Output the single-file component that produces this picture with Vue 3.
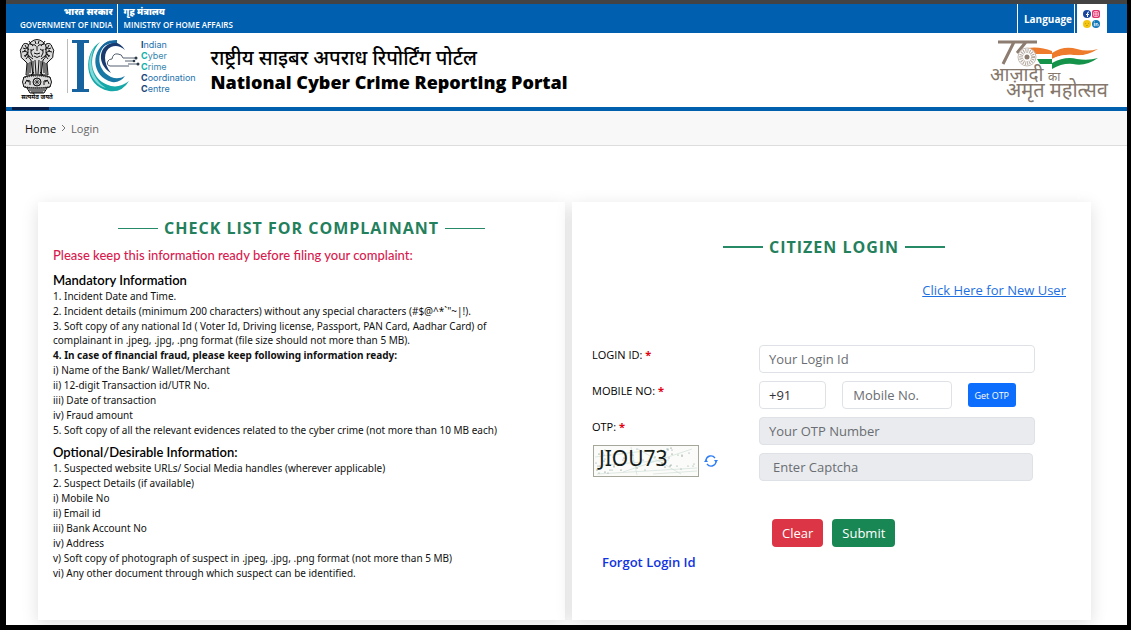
<template>
  <div class="page">
    <div class="topbar">
      <div class="gov">
        <span class="gov-item gov-india"><b lang="hi">भारत सरकार</b>GOVERNMENT OF INDIA</span>
        <span class="gov-item"><b lang="hi">गृह मंत्रालय</b>MINISTRY OF HOME AFFAIRS</span>
      </div>
      <div class="tools">
        <button type="button" class="language">Language</button>
        <a href="#" class="social" aria-label="Social media">
          <svg width="18" height="20" viewBox="0 0 18 20">
            <circle cx="4" cy="5" r="4" fill="#17479e" />
            <path d="M4.500 8V5.500H6M4.500 5.500H3M4.500 5.500V3.800Q4.500 3 6 3" stroke="#fff" fill="none" />
            <rect x="9" y="1" width="8" height="8" rx="2" fill="#e1306c" />
            <rect x="10.500" y="2.500" width="5" height="5" rx="1.500" fill="none" stroke="#ffd3e2" stroke-width=".8" />
            <circle cx="13" cy="5" r="1.200" fill="none" stroke="#fff" stroke-width=".8" />
            <circle cx="4" cy="15" r="4" fill="#f2c511" />
            <path d="M2 14.500h1M5 14.500h1M3 16.500h2" stroke="#c69a00" stroke-width=".8" />
            <circle cx="13" cy="15" r="4" fill="#1178b8" />
            <path d="M11.300 14v3.200M11.300 12.500v.8M13 17.200V14M13 15.200q1.800-1.600 2 .2v1.800" stroke="#fff" fill="none" stroke-width=".9" />
          </svg>
        </a>
      </div>
    </div>

    <header class="header">
      <svg class="emblem" width="36" height="64" viewBox="0 0 36 64" role="img" aria-label="State Emblem of India">
        <g fill="#d9d9d9" stroke="#111" stroke-width="1">
          <path d="M9 6q-5-2-6 3q-3 3-1 7q-1 4 3 6l3 3-1 12h7l1-14z" />
          <path d="M27 6q5-2 6 3q3 3 1 7q1 4-3 6l-3 3 1 12h-7l-1-14z" />
          <path d="M12 4q6-5 12 0q4 3 3 9q1 6-3 9l-2 15h-8l-2-15q-4-3-3-9q-1-6 3-9z" />
          <path d="M5 39q13-4 26 0q3 5 0 10q-13 4-26 0q-3-5 0-10z" />
          <path d="M8 50h20l-3 5H11z" />
        </g>
        <g fill="none" stroke="#111" stroke-width="1">
          <path d="M13 8q2-3 4 0M19 8q2-3 4 0M18 8v5M15 15q3 2 6 0M15 18q3 3 6 0M12 11q-1 4 2 8M24 11q1 4-2 8" />
          <path d="M4 10l3 1M3 14l4-1M5 18l4-2M8 9l2 3M7 21l3-4M32 10l-3 1M33 14l-4-1M31 18l-4-2M28 9l-2 3M29 21l-3-4" />
          <path d="M6 7l2 4M5 12l4 3M9 14l-3 5M30 7l-2 4M31 12l-4 3M27 14l3 5M11 6l3 1M25 6l-3 1M10 18l4 3M26 18l-4 3" />
          <path d="M14 23v13M16 22l1 14M20 22l-1 14M22 23v13M9 25v11M27 25v11M11 24v11M25 24v11M12 37l3-3M24 37l-3-3" />
          <path d="M10 3l2 3M26 3l-2 3M12 13l3-2M24 13l-3-2M16 3l1 3M20 3l-1 3" />
          <circle cx="18" cy="44" r="4" />
          <path d="M18 40v8M14 44h8M15 41l6 6M21 41l-6 6" stroke-width=".6" />
          <path d="M6 46q1-5 5-3v4M7 42l3 2M30 46q-1-5-5-3v4M29 42l-3 2M10 52h16M12 54h12" />
          <path d="M4 40q14-4 28 0M4 48q14 4 28 0" stroke-dasharray="1 1" />
        </g>
        <text x="18" y="61" text-anchor="middle" font-size="6" font-weight="700" lang="hi">सत्यमेव जयते</text>
      </svg>

      <div class="i4c">
        <svg width="69" height="56" viewBox="0 0 69 56" aria-hidden="true">
          <path d="M1 2h17v3h-5v46h5v3H1v-3h5V5H1z" fill="#17639f" />
          <path d="M29 4C12 14 12 48 38 53Q51 55 58 43Q49 50 40 48C20 43 15 20 29 4z" fill="#16a7a8" />
          <path d="M24 8C13 24 18 45 35 50C20 40 17 23 24 8z" fill="#7fd9da" />
          <path d="M40 2C18 10 20 39 41 44Q49 45 54 38Q47 42 40 39C24 31 25 11 40 2z" fill="#1777a5" />
          <path d="M54 12Q47 1 38 6C26 12 28 28 40 35C32 25 32 13 40 9Q47 6 54 12z" fill="#1a3b70" />
          <path d="M46 2Q31 2 28 14Q34 4 46 5z" fill="#1667a0" />
          <path d="M58 28H39q-4-1-2-5q1-2 4-2q1-6 6-5q4 0 5 4h12" fill="#fff" stroke="#53606e" />
          <path d="M54 23h9M57 26h10" fill="none" stroke="#53606e" />
          <g fill="#2b3948"><circle cx="65" cy="20" r="1.500" /><circle cx="63" cy="23" r="1.300" /><circle cx="67" cy="26" r="1.500" /></g>
        </svg>
        <p class="i4c-name">
          <span v-for="w in i4cWords" :key="w.text" :class="w.tone"><b>{{ w.text[0] }}</b>{{ w.text.slice(1) }}</span>
        </p>
      </div>

      <h1 class="title"><span lang="hi">राष्ट्रीय साइबर अपराध रिपोर्टिंग पोर्टल</span>National Cyber Crime Reporting Portal</h1>

      <svg class="azadi" width="124" height="66" viewBox="0 0 124 66" role="img" aria-label="Azadi Ka Amrit Mahotsav">
        <path d="M9 5H48M25 5L14 27M37 5L28 16" fill="none" stroke="#8c7d70" stroke-width="3" />
        <path d="M38 11Q51 9 63 14V16Q75 8 88 12Q98 15 109 12Q96 20 85 18Q73 17 63 22V17H45z" fill="#ee7b2c" />
        <path d="M63 22Q73 17 85 18Q96 19 104 16L97 21Q80 18 63 27z" fill="#fff" />
        <path d="M48 22H63V26Q76 19 88 22Q99 24 109 21Q96 30 84 27Q73 26 63 32V27H51z" fill="#16934a" />
        <circle cx="38" cy="20" r="9" fill="#fff" stroke="#c3bbb3" />
        <circle cx="38" cy="20" r="6" fill="none" stroke="#b5aba1" stroke-width="4" stroke-dasharray="1 1" />
        <circle cx="38" cy="20" r="2.500" fill="#8c7d70" />
        <g fill="#85776b" lang="hi">
          <text x="1" y="44" font-size="19">आज़ादी</text>
          <text x="59" y="44" font-size="12">का</text>
          <text x="17" y="60" font-size="20">अमृत महोत्सव</text>
        </g>
      </svg>
    </header>

    <nav class="breadcrumb" aria-label="Breadcrumb">
      <a href="#">Home</a>
      <svg width="5" height="8" viewBox="0 0 5 8" aria-hidden="true"><path d="M1 1l3 3-3 3" fill="none" stroke="#777" /></svg>
      <span>Login</span>
    </nav>

    <main class="cards">
      <section class="card checklist">
        <h2 class="heading thin">CHECK LIST FOR COMPLAINANT</h2>
        <p class="notice">Please keep this information ready before filing your complaint:</p>
        <template v-for="group in checklist" :key="group.title">
          <h3>{{ group.title }}</h3>
          <ul>
            <li v-for="item in group.items" :key="item" :class="{ strong: item.startsWith('4.') }">{{ item }}</li>
          </ul>
        </template>
      </section>

      <section class="card login">
        <h2 class="heading">CITIZEN LOGIN</h2>
        <a href="#" class="new-user">Click Here for New User</a>

        <form @submit.prevent>
          <div class="form-body">
            <div class="labels">
              <label for="login-id">LOGIN ID: <b>*</b></label>
              <label for="mobile">MOBILE NO: <b>*</b></label>
              <label for="otp">OTP: <b>*</b></label>
              <div class="captcha">
                <svg class="captcha-image" width="106" height="32" viewBox="0 0 106 32" role="img" aria-label="Captcha">
                  <rect x=".5" y=".5" width="105" height="31" fill="#fbfcf9" stroke="#a5a79b" />
                  <path
                    d="M2 12L60 5M4 29L104 23M38 2L44 30M10 20L76 15M45 4L88 29M30 27L99 4M60 29L104 26"
                    stroke="#cbdad3"
                    stroke-width=".6"
                  />
                  <circle v-for="(d, i) in specks" :key="i" :cx="d.x" :cy="d.y" r=".6" :fill="d.color" />
                  <text x="6" y="21" font-size="21" fill="#161c19">JIOU73</text>
                </svg>
                <button type="button" class="refresh" aria-label="Refresh captcha">
                  <svg width="14" height="14" viewBox="0 0 14 14" fill="none" stroke="#2f7df6">
                    <path d="M2 6a5 5 0 0 1 9-2M12 8a5 5 0 0 1-9 2" stroke-width="1.300" />
                    <path d="M10 6h4l-2 3zM0 8h4L2 5z" fill="#2f7df6" stroke="none" />
                  </svg>
                </button>
              </div>
            </div>
            <div class="fields">
              <input id="login-id" v-model="loginId" type="text" placeholder="Your Login Id" />
              <div class="mobile-row">
                <input v-model="code" class="code" type="text" aria-label="Country code" />
                <input id="mobile" v-model="mobile" class="mobile" type="tel" placeholder="Mobile No." />
                <button type="button" class="btn get-otp">Get OTP</button>
              </div>
              <input id="otp" type="text" placeholder="Your OTP Number" disabled />
              <input class="captcha-input" type="text" placeholder="Enter Captcha" aria-label="Enter Captcha" disabled />
            </div>
          </div>
          <div class="actions">
            <button type="button" class="btn clear" @click="clear">Clear</button>
            <button type="submit" class="btn submit">Submit</button>
          </div>
        </form>
        <a href="#" class="forgot">Forgot Login Id</a>
      </section>
    </main>
  </div>
</template>

<script setup>
import { ref } from 'vue'

const loginId = ref('')
const code = ref('+91')
const mobile = ref('')

function clear() {
  loginId.value = ''
  mobile.value = ''
}

const i4cWords = [
  { text: 'Indian', tone: 'blue' },
  { text: 'Cyber', tone: 'teal' },
  { text: 'Crime', tone: 'teal' },
  { text: 'Coordination', tone: 'blue' },
  { text: 'Centre', tone: 'navy' },
]

// captcha noise, scattered with a small fixed-seed generator
let seed = 7
function next(max) {
  seed = (seed * 16807) % 2147483647
  return seed % max
}
const specks = Array.from({ length: 60 }, (_, i) => ({
  x: 3 + next(100),
  y: 3 + next(27),
  color: ['#7fa08c', '#8391a8', '#55705f'][i % 3],
}))

const checklist = [
  {
    title: 'Mandatory Information',
    items: [
      '1. Incident Date and Time.',
      '2. Incident details (minimum 200 characters) without any special characters (#$@^*`"~|!).',
      '3. Soft copy of any national Id ( Voter Id, Driving license, Passport, PAN Card, Aadhar Card) of complainant in .jpeg, .jpg, .png format (file size should not more than 5 MB).',
      '4. In case of financial fraud, please keep following information ready:',
      'i) Name of the Bank/ Wallet/Merchant',
      'ii) 12-digit Transaction id/UTR No.',
      'iii) Date of transaction',
      'iv) Fraud amount',
      '5. Soft copy of all the relevant evidences related to the cyber crime (not more than 10 MB each)',
    ],
  },
  {
    title: 'Optional/Desirable Information:',
    items: [
      '1. Suspected website URLs/ Social Media handles (wherever applicable)',
      '2. Suspect Details (if available)',
      'i) Mobile No',
      'ii) Email id',
      'iii) Bank Account No',
      'iv) Address',
      'v) Soft copy of photograph of suspect in .jpeg, .jpg, .png format (not more than 5 MB)',
      'vi) Any other document through which suspect can be identified.',
    ],
  },
]
</script>

<style>
body {
  margin: 0;
  background: #fff;
}
</style>

<style scoped>
* {
  box-sizing: border-box;
}
.page {
  display: flex;
  flex-direction: column;
  min-height: calc(100vh - 1px);
  border: solid #000;
  border-width: 0 4px 5px 6px;
  background: #fff;
  color: #111;
  font-family: 'Open Sans', 'Noto Sans', sans-serif;
  box-shadow: inset 0 4px #434343;
}
h1,
h2,
h3,
p,
ul {
  margin: 0;
  padding: 0;
}
button,
input {
  font-family: inherit;
}

.topbar {
  display: flex;
  justify-content: space-between;
  height: 29px;
  margin-top: 4px;
  background: #005fae;
  color: #fff;
}
.gov,
.tools {
  display: flex;
}
.gov-item {
  display: flex;
  flex-direction: column;
  padding: 1px 8px 0 6px;
  font-size: 8px;
  font-weight: 600;
  line-height: 13px;
}
.gov-item b {
  font-size: 9px;
}
.gov-india {
  padding: 1px 4px 0 14px;
  border-right: 1px solid #fff;
  text-align: right;
}
.tools {
  padding-right: 20px;
}
.language {
  padding: 0 2px 0 6px;
  border: solid #fff;
  border-width: 0 1px;
  background: none;
  color: #fff;
  font-size: 10px;
  font-weight: 700;
  cursor: pointer;
}
.social {
  display: grid;
  place-items: center;
  width: 30px;
  margin-left: 2px;
  background: #fff;
}

.header {
  display: flex;
  align-items: center;
  height: 78px;
  padding: 0 14px 0 13px;
  border-bottom: 4px solid #0060ad;
}
.i4c {
  display: flex;
  align-items: center;
  gap: 1px;
  height: 54px;
  margin: 0 15px 8px 12px;
  padding-left: 3px;
  border-left: 1px solid #bbb;
}
.i4c-name {
  display: flex;
  flex-direction: column;
  font-family: Inter, sans-serif;
  font-size: 9px;
  line-height: 11px;
}
.blue {
  color: #2472ad;
}
.teal {
  color: #3a88ad;
}
.teal b {
  color: #10b0ac;
}
.navy {
  color: #2472ad;
}
.blue b,
.navy b {
  color: #174478;
}
.title {
  flex: 1;
  color: #000;
  font-size: 18px;
  font-weight: 800;
  line-height: 24px;
}
.title span {
  display: block;
  font-size: 20px;
  font-weight: 500;
}

/* dark tab that marks the active section on the header rule */
.breadcrumb::before {
  content: '';
  position: absolute;
  top: -4px;
  left: 6px;
  width: 37px;
  height: 3px;
  background: #0a1f47;
}
.breadcrumb {
  position: relative;
  display: flex;
  align-items: center;
  gap: 5px;
  height: 35px;
  padding-left: 19px;
  border-bottom: 1px solid #ddd;
  background: #f8f8f8;
  color: #666;
  font-size: 11px;
}
.breadcrumb a {
  color: #111;
  text-decoration: none;
}

.cards {
  display: grid;
  flex: 1;
  grid-template-columns: 527fr 519fr;
  gap: 7px;
  padding: 56px 36px 5px 32px;
}
.card {
  background: #fff;
  box-shadow: 0 4px 16px rgba(0, 0, 0, 0.13);
}
.heading {
  display: flex;
  align-items: center;
  justify-content: center;
  gap: 6px;
  color: #23805c;
  font-size: 16px;
  font-weight: 700;
  letter-spacing: 1px;
  line-height: 24px;
}
.heading::before,
.heading::after {
  content: '';
  width: 40px;
  height: 2px;
  background: #268a66;
}
.thin::before,
.thin::after {
  height: 1px;
}
.checklist {
  padding: 14px 15px;
}
.notice {
  margin-top: 5px;
  color: #d81b4f;
  font-family: Lato, sans-serif;
  font-size: 13px;
  font-weight: 500;
  line-height: 20px;
}
.checklist h3 {
  margin-top: 6px;
  color: #000;
  font-family: Lato, sans-serif;
  font-size: 13px;
  font-weight: 600;
  line-height: 18px;
}
.checklist ul {
  padding-right: 32px;
  font-family: 'Noto Sans', sans-serif;
  list-style: none;
  font-size: 10px;
  line-height: 14px;
}
.checklist li {
  margin-bottom: 1px;
}
.checklist .strong {
  font-weight: 700;
}

.login {
  display: flex;
  flex-direction: column;
  padding: 33px 25px 48px 20px;
}
.login .heading {
  padding-left: 10px;
}
.new-user {
  align-self: flex-end;
  margin-top: 21px;
  color: #1e6fe0;
  font-size: 13px;
  line-height: 20px;
}
form {
  margin-top: 45px;
}
.form-body {
  display: flex;
}
.labels {
  display: flex;
  flex: 167;
  flex-direction: column;
  gap: 16px;
  color: #000;
  font-size: 11px;
  font-weight: 500;
  line-height: 20px;
}
.labels b {
  color: #e3000f;
}
.captcha {
  display: flex;
  align-items: center;
  gap: 5px;
  margin-top: -8px;
  padding-left: 1px;
}
.captcha-image {
  font-family: 'Noto Sans', sans-serif;
  font-weight: 400;
}
.refresh {
  display: flex;
  padding: 0;
  border: 0;
  background: none;
  cursor: pointer;
}
.fields {
  display: flex;
  flex: 276;
  flex-direction: column;
  gap: 8px;
  margin-right: 31px;
}
.fields input {
  width: 100%;
  min-width: 0;
  height: 28px;
  padding: 0 9px;
  border: 1px solid #dee2e6;
  border-radius: 4px;
  background: #fff;
  color: #333;
  font-size: 13px;
}
.fields input::placeholder {
  color: #6a6d72;
  opacity: 1;
}
.fields input:disabled {
  background: #e9ebee;
}
.fields .captcha-input {
  width: calc(100% - 2px);
  padding-left: 13px;
}
.mobile-row {
  display: flex;
  align-items: center;
  gap: 16px;
}
.fields .code {
  flex: 1 1 67px;
}
.fields .mobile {
  flex: 1 1 109px;
  padding: 0 10px;
}
.btn {
  border: 0;
  border-radius: 4px;
  color: #fff;
  cursor: pointer;
}
.get-otp {
  height: 24px;
  margin-right: 19px;
  padding: 0 7px;
  border-radius: 3px;
  background: #0d6efd;
  font-size: 9px;
}
.actions {
  display: flex;
  gap: 9px;
  margin: 38px 0 0 180px;
}
.actions .btn {
  height: 28px;
  padding: 0 10px;
  font-size: 13px;
}
.clear {
  background: #dc3545;
}
.submit {
  background: #198754;
}
.forgot {
  align-self: flex-start;
  margin: 5px 0 0 10px;
  color: #1133e0;
  font-size: 13px;
  font-weight: 600;
  line-height: 20px;
  text-decoration: none;
}
</style>
